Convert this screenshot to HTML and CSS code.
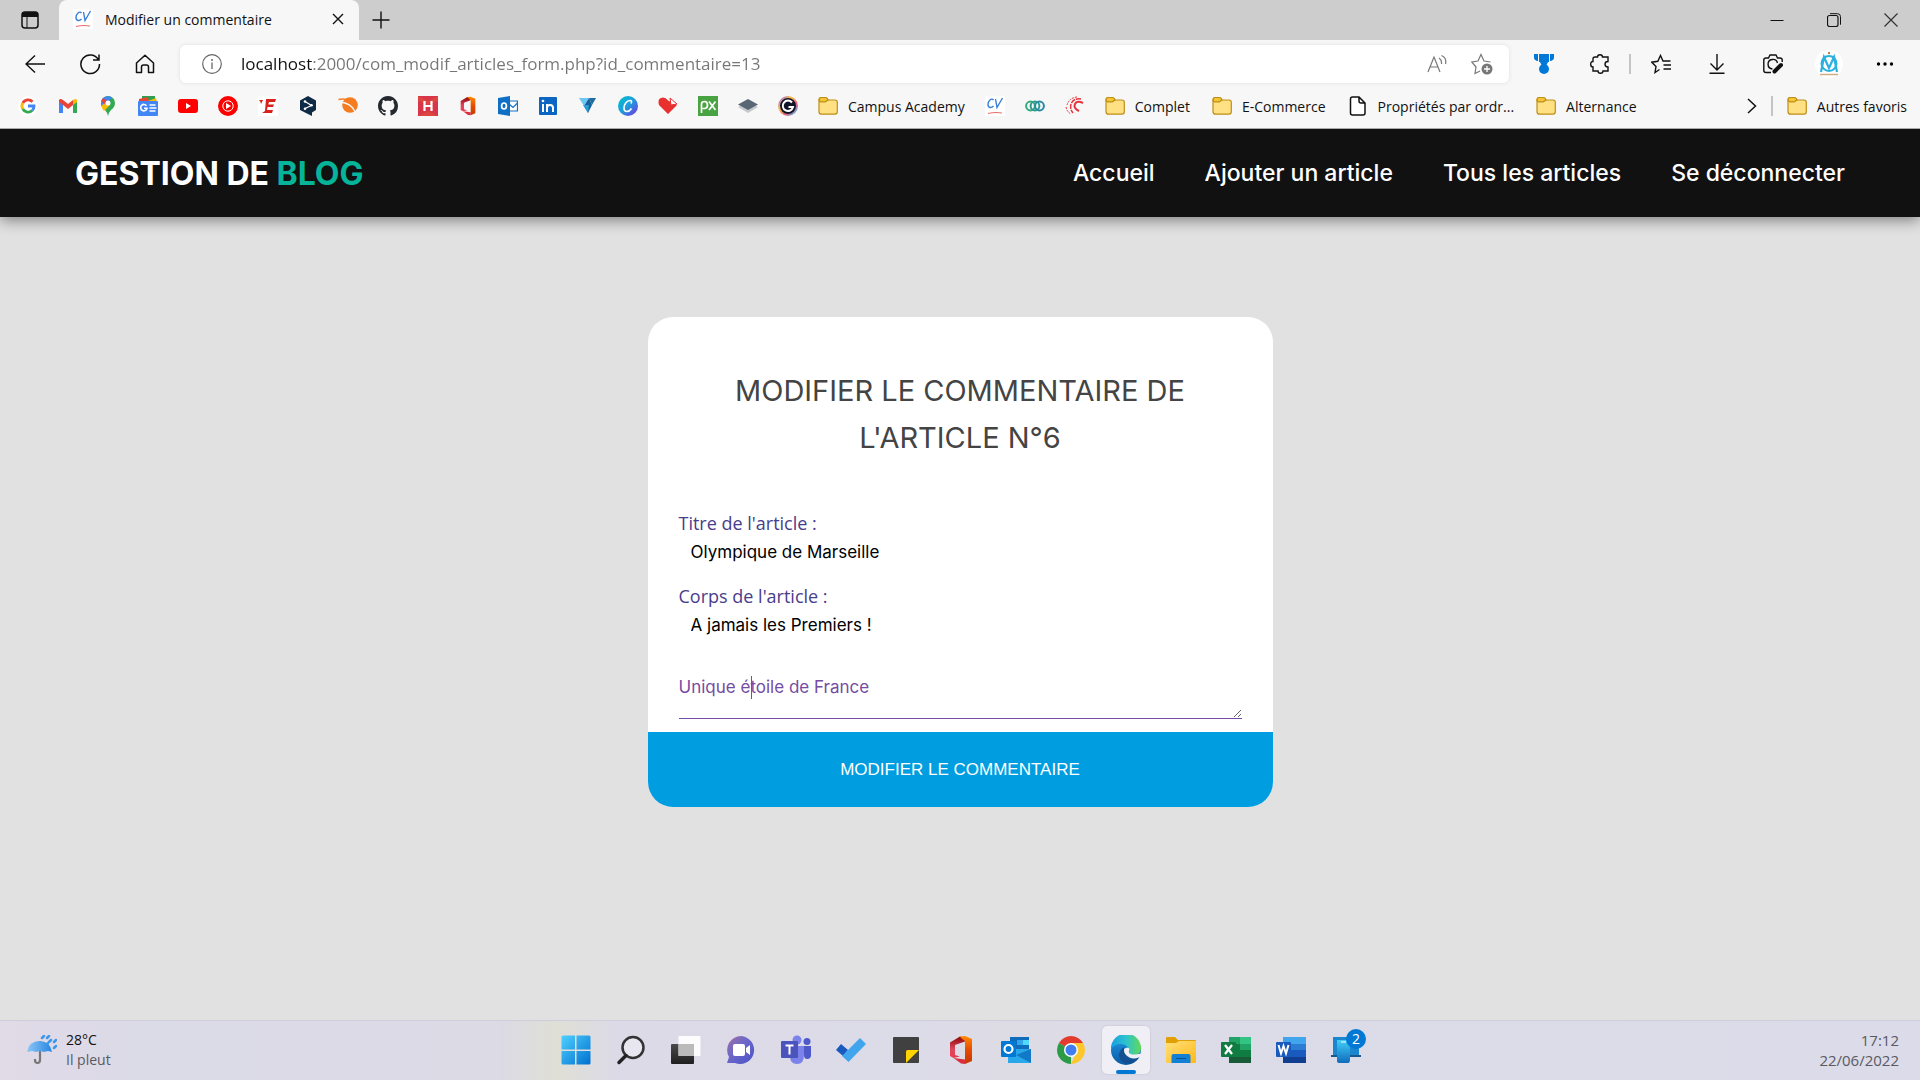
FILE: index.html
```html
<!DOCTYPE html>
<html lang="fr">
<head>
<meta charset="utf-8">
<meta name="viewport" content="width=device-width, initial-scale=1">
<title>Modifier un commentaire</title>
<link rel="stylesheet" href="styles.css">
</head>
<body>
<svg class="defs" aria-hidden="true">
  <defs>
    <linearGradient id="win" x1="0" y1="0" x2="1" y2="1"><stop offset="0" stop-color="#4fd0ff"/><stop offset="1" stop-color="#0070d0"/></linearGradient>
    <linearGradient id="dark" x1="0" y1="0" x2="0" y2="1"><stop offset="0" stop-color="#4a4a4a"/><stop offset="1" stop-color="#1f1f1f"/></linearGradient>
    <linearGradient id="chat" x1="0" y1="0" x2="1" y2="1"><stop offset="0" stop-color="#a36f9e"/><stop offset=".4" stop-color="#6e68c8"/><stop offset="1" stop-color="#4a52c8"/></linearGradient>
    <linearGradient id="office" x1="0" y1="0" x2="0" y2="1"><stop offset="0" stop-color="#ff8a00"/><stop offset=".5" stop-color="#e64a00"/><stop offset="1" stop-color="#c43800"/></linearGradient>
    <linearGradient id="office2" x1="0" y1="0" x2="0" y2="1"><stop offset="0" stop-color="#8c0808"/><stop offset=".6" stop-color="#e0475e"/><stop offset="1" stop-color="#e83a4f"/></linearGradient>
    <linearGradient id="edgeTop" x1="0" y1="0" x2="1" y2="0"><stop offset="0" stop-color="#1b9de2"/><stop offset=".5" stop-color="#2cc3cf"/><stop offset="1" stop-color="#62d957"/></linearGradient>
    <linearGradient id="edgeLow" x1="0" y1="0" x2="0" y2="1"><stop offset="0" stop-color="#1f9ce8"/><stop offset="1" stop-color="#0c59a4"/></linearGradient>
    <linearGradient id="fold" x1="0" y1="0" x2="1" y2="1"><stop offset="0" stop-color="#ffe07a"/><stop offset="1" stop-color="#ffb91a"/></linearGradient>
    <linearGradient id="canva" x1="0" y1="0" x2="1" y2="1"><stop offset="0" stop-color="#00c4cc"/><stop offset=".5" stop-color="#1f9bdc"/><stop offset="1" stop-color="#7d2ae8"/></linearGradient>
    <linearGradient id="brolly" x1="0" y1="0" x2="1" y2="0"><stop offset="0" stop-color="#8cc6f5"/><stop offset="1" stop-color="#2786e0"/></linearGradient>
    <linearGradient id="ring" x1="0" y1="0" x2="1" y2="1"><stop offset="0" stop-color="#a35cf0"/><stop offset=".35" stop-color="#f9c440"/><stop offset=".65" stop-color="#ef5a7e"/><stop offset="1" stop-color="#3bc9f0"/></linearGradient>
    <linearGradient id="phone" x1="0" y1="0" x2="0" y2="1"><stop offset="0" stop-color="#43cdf6"/><stop offset="1" stop-color="#0f6cbd"/></linearGradient>
    <symbol id="i-folder" viewBox="0 0 20 20"><path d="M1 4.500Q1 1.500 4 1.500H7.500Q9 1.500 10 4H17Q19.300 4 19.300 6.300V15.500Q19.300 18.200 17 18.200H3.500Q1 18.200 1 15.500Z" fill="#ffe083" stroke="#bd8f18" stroke-width="1.200"/><path d="M1 3.800Q1 1.500 3.200 1.500H7.500Q9 1.500 10 4L7.300 5.800H3Q1 5.800 1 3.800Z" fill="#f5c432" stroke="#bd8f18" stroke-width="1.200"/></symbol>
    <symbol id="i-cv" viewBox="0 0 20 20"><rect width="20" height="20" fill="#fff"/><path d="M8.500 4C6.500 1.500 3 5 3 8.500S6.500 12.500 8.500 9.800M10.500 3L12 11.500 17.500 2" fill="none" stroke="#3b80d8" stroke-width="1.400"/><path d="M3 17.500Q10 15.800 17 17" fill="none" stroke="#ee6b6b" stroke-width="1.200"/></symbol>
    <symbol id="i-office" viewBox="0 0 30 30"><path d="M4 7.500L14 1.500 19 3v3.500L9 10v10l5 1.500v0L7.500 23 4 21Z" fill="url(#office2)"/><path d="M14 1.500L19 1l7 3v22l-7 3V6l-4-3Z" fill="url(#office)"/><path d="M7.500 23L19 24.500V29l-4-.500Z" fill="#d9303f"/></symbol>
  </defs>
</svg>

<header class="browser">
  <div class="titlebar">
    <button class="tab-menu" aria-label="Menu des onglets"><svg width="20" height="20" viewBox="0 0 20 20"><rect x="2" y="2" width="16" height="16" rx="3" fill="none" stroke="#111" stroke-width="1.500"/><path d="M2 7V4q0-2 2-2h12q2 0 2 2v3Z" fill="#111"/><path d="M7 7v11" stroke="#111"/></svg></button>
    <div class="tab">
      <svg width="20" height="20"><use href="#i-cv"/></svg>
      <span class="tab-title">Modifier un commentaire</span>
      <button aria-label="Fermer l'onglet"><svg width="12" height="12" viewBox="0 0 12 12"><path d="M1 1l10 10M11 1L1 11" stroke="#111" stroke-width="1.400"/></svg></button>
    </div>
    <button class="new-tab" aria-label="Nouvel onglet"><svg width="18" height="18" viewBox="0 0 18 18"><path d="M9 .500v17M.500 9h17" stroke="#111" stroke-width="1.400"/></svg></button>
    <div class="window-controls">
      <button aria-label="Réduire"><svg width="14" height="14" viewBox="0 0 14 14"><path d="M.500 7.500h13" stroke="#111"/></svg></button>
      <button aria-label="Restaurer"><svg width="14" height="14" viewBox="0 0 14 14"><rect x=".500" y="2.500" width="10.500" height="11" rx="2" fill="none" stroke="#111" stroke-width="1.200"/><path d="M3 .700h7.500q3 0 3 3v8" fill="none" stroke="#111"/></svg></button>
      <button aria-label="Fermer"><svg width="14" height="14" viewBox="0 0 14 14"><path d="M.500.500l13 13M13.500.500l-13 13" stroke="#333" stroke-width="1.200"/></svg></button>
    </div>
  </div>

  <div class="toolbar">
    <button class="tool" aria-label="Précédent"><svg width="20" height="20" viewBox="0 0 20 20"><path d="M10 1.500L1 10l9 8.500M1 10h19" fill="none" stroke="#111" stroke-width="1.400"/></svg></button>
    <button class="tool" aria-label="Actualiser"><svg width="22" height="22" viewBox="0 0 22 22"><path d="M19.500 7A9.300 9.300 0 1 0 20.500 11M20 1.500V7h-6" fill="none" stroke="#111" stroke-width="1.500"/></svg></button>
    <button class="tool" aria-label="Accueil"><svg width="20" height="20" viewBox="0 0 20 20"><path d="M1.500 9L10 1.200 18.500 9v9.500h-5V13q0-2-2-2h-3q-2 0-2 2v5.500h-5Z" fill="none" stroke="#111" stroke-width="1.500" stroke-linejoin="round"/></svg></button>
    <div class="address">
      <svg width="20" height="20" viewBox="0 0 20 20"><circle cx="10" cy="10" r="9.300" fill="none" stroke="#666" stroke-width="1.200"/><path d="M10 8.500v6.500" stroke="#666" stroke-width="1.300"/><circle cx="10" cy="6" r="1" fill="#666"/></svg>
      <input class="url" type="text" aria-label="Adresse" value="localhost:2000/com_modif_articles_form.php?id_commentaire=13">
      <button aria-label="Lecture à voix haute"><svg width="20" height="20" viewBox="0 0 20 20"><path d="M1 18L7 3l6 15M3 13h8M12 4q3 2 2.500 6M14.500 1.500Q20 4 18.500 10" fill="none" stroke="#777" stroke-width="1.200"/></svg></button>
      <button aria-label="Ajouter aux favoris"><svg width="22" height="22" viewBox="0 0 22 22"><path d="M9 18L4 20.500 5 14 .800 9 7 8 10 1.500 13 8 19.500 9" fill="none" stroke="#777" stroke-width="1.200"/><circle cx="16" cy="16" r="5.500" fill="#777"/><path d="M16 13v6M13 16h6" stroke="#fff" stroke-width="1.300"/></svg></button>
    </div>
    <div class="tools">
      <button class="tool" aria-label="Rewards"><svg width="20" height="20" viewBox="0 0 20 20"><path d="M0 0h4v7H3Q0 6 0 4ZM5 0h10v8H5ZM16 0h4v4q0 2-3 3h-1ZM6 8h8l-2 4H8Z" fill="#0078d7"/><circle cx="10" cy="15" r="5" fill="#0078d7"/></svg></button>
      <button class="tool" aria-label="Extensions"><svg width="20" height="20" viewBox="0 0 20 20"><path d="M5 3h2.500Q7.500 .800 10 .800T12.500 3H18v4.500q-3 0-3 2.700T18 13v4h-5q0 2.200-2.500 2.200T8 17H3v-4Q.700 13 .700 10.200T3 7.500V5Q3 3 5 3Z" fill="none" stroke="#111" stroke-width="1.400"/></svg></button>
      <span class="separator"></span>
      <button class="tool" aria-label="Favoris"><svg width="20" height="20" viewBox="0 0 20 20"><path d="M8.500 15.500L4 18.500 5 12.500 .800 8.200 6.800 7.300 9.500 1.500 12 7H19.500M12.500 11H20M12.500 15H20" fill="none" stroke="#111" stroke-width="1.400"/></svg></button>
      <button class="tool" aria-label="Téléchargements"><svg width="20" height="20" viewBox="0 0 20 20"><path d="M10 0v16M3.500 9.500L10 16l6.500-6.500M2.500 19.200h15" fill="none" stroke="#111" stroke-width="1.400"/></svg></button>
      <button class="tool" aria-label="Capture web"><svg width="20" height="20" viewBox="0 0 20 20"><path d="M8 18.500H3q-2.200 0-2.200-2V6Q.800 4 3 4h2.500L7 1h6l1.500 3H17q2.200 0 2.200 2v2" fill="none" stroke="#111" stroke-width="1.400"/><path d="M9.500 15A4.800 4.800 0 1 1 14.500 9" fill="none" stroke="#111" stroke-width="1.400"/><path d="M11.500 17.500l6.500-6.500" stroke="#111" stroke-width="4" stroke-linecap="round"/></svg></button>
      <button class="tool" aria-label="Profil"><svg width="28" height="28" viewBox="0 0 28 28"><circle cx="14" cy="14" r="14" fill="#fff"/><circle cx="14" cy="13.500" r="7.500" fill="none" stroke="#2bb0df" stroke-width="2"/><path d="M6 22L9 7l5 11 5-11 3 15" fill="none" stroke="#2bb0df" stroke-width="2.200"/><circle cx="14" cy="3" r="1.200" fill="#c0824a"/><path d="M5 24.500h18" stroke="#cfae83" stroke-width="1.500"/></svg></button>
      <button class="tool" aria-label="Paramètres et plus"><svg width="18" height="6" viewBox="0 0 18 6"><circle cx="2.500" cy="3" r="1.700"/><circle cx="9" cy="3" r="1.700"/><circle cx="15.500" cy="3" r="1.700"/></svg></button>
    </div>
  </div>

  <nav class="bookmarks" aria-label="Favoris">
    <a href="#" aria-label="Google"><svg width="20" height="20" viewBox="0 0 20 20"><circle cx="10" cy="10" r="10" fill="#fff"/><g fill="none" stroke-width="2.800"><path d="M14.500 5.800A6 6 0 0 0 4.800 7" stroke="#ea4335"/><path d="M4.800 7a6 6 0 0 0 0 6" stroke="#fbbc05"/><path d="M4.800 13a6 6 0 0 0 9.400 1.500" stroke="#34a853"/><path d="M14.200 14.500A6 6 0 0 0 16 10H10" stroke="#4285f4"/></g></svg></a>
    <a href="#" aria-label="Gmail"><svg width="20" height="20" viewBox="0 0 20 20"><path d="M1 4v13h4V8Z" fill="#4285f4"/><path d="M19 4v13h-4V8Z" fill="#34a853"/><path d="M1 4q1-2 4 0l5 4 5-4v5l-5 4-5-4-4-3Z" fill="#ea4335"/><path d="M15 4q3-2 4 0v2l-4 3Z" fill="#fbbc04"/></svg></a>
    <a href="#" aria-label="Google Maps"><svg width="20" height="20" viewBox="0 0 20 20"><path d="M3 7a7 7 0 0 1 14 0q0 4-4 7-2 2-3 6-1-4-3-6-4-3-4-7Z" fill="#34a853"/><path d="M3 7a7 7 0 0 1 11-5.500L4.500 12Q3 9.500 3 7Z" fill="#4285f4"/><path d="M3.500 10L8 5l4 4-6 6Q4 12.500 3.500 10Z" fill="#fbbc04"/><path d="M3.500 4.500L5 2l4 3-3 3.500Z" fill="#ea4335"/><circle cx="10" cy="7" r="2.500" fill="#fff"/></svg></a>
    <a href="#" aria-label="Google Actualités"><svg width="20" height="20" viewBox="0 0 20 20"><path d="M4 0h13v5H4Z" fill="#2f9e50"/><path d="M1 3l9-2 1 5H1Z" fill="#e94235"/><path d="M10 5l8-3 1 4h-9Z" fill="#fbbc04"/><rect y="5" width="20" height="15" rx="1" fill="#4285f4"/><path d="M8.500 9.800A3.200 3.200 0 1 0 9 12.300H6M11.500 9h6M11.500 12h7M11.500 15h6" fill="none" stroke="#fff" stroke-width="1.600"/></svg></a>
    <a href="#" aria-label="YouTube"><svg width="20" height="20" viewBox="0 0 20 20"><rect y="3" width="20" height="14" rx="3" fill="#f00"/><path d="M8 7l5 3-5 3Z" fill="#fff"/></svg></a>
    <a href="#" aria-label="YouTube Music"><svg width="20" height="20" viewBox="0 0 20 20"><circle cx="10" cy="10" r="10" fill="#f00"/><circle cx="10" cy="10" r="5.200" fill="none" stroke="#fff"/><path d="M8 7l5 3-5 3Z" fill="#fff"/></svg></a>
    <a href="#" aria-label="L'Équipe"><svg width="20" height="20" viewBox="0 0 20 20"><rect width="20" height="20" fill="#fff"/><path d="M1 4h4L3 8 2.500 6Z M8 3h10l-1 3h-6l-.700 2.500H16l-1 2.500H9.500L9 14h6l-1 3H4l3-2Z" fill="#d8231b"/></svg></a>
    <a href="#" aria-label="DeepL"><svg width="20" height="20" viewBox="0 0 20 20"><path d="M10 0l8 4.500v9.500l-4 2.500V20l-5-2.500L2 14V4.500Z" fill="#0f2b46"/><path d="M7 5.500l6.500 4L7 12.500" fill="none" stroke="#fff" stroke-width="1.200"/><circle cx="7" cy="5.500" r="1.300" fill="#fff"/><circle cx="13.500" cy="9.300" r="1.300" fill="#fff"/><circle cx="7" cy="12.700" r="1.300" fill="#fff"/></svg></a>
    <a href="#" aria-label="Astronomie"><svg width="20" height="20" viewBox="0 0 20 20"><circle cx="12" cy="9" r="7.800" fill="#f57c20"/><path d="M2 6q11 1 15 9.500" fill="none" stroke="#f7f7f7" stroke-width="1.300"/><path d="M.500 3.500q6-1.500 10 1" fill="none" stroke="#f57c20" stroke-width="1.400"/></svg></a>
    <a href="#" aria-label="GitHub"><svg width="20" height="20" viewBox="0 0 16 16"><path fill="#24292f" d="M8 0C3.580 0 0 3.580 0 8c0 3.540 2.290 6.530 5.470 7.590.4.070.55-.17.55-.38 0-.19-.01-.82-.01-1.490-2.010.37-2.530-.49-2.690-.94-.09-.23-.48-.94-.82-1.130-.28-.15-.68-.52-.01-.53.630-.01 1.080.58 1.230.82.720 1.210 1.870.87 2.330.66.070-.52.280-.87.510-1.070-1.780-.2-3.640-.89-3.640-3.950 0-.87.310-1.590.82-2.150-.08-.2-.36-1.020.08-2.120 0 0 .67-.21 2.200.82.640-.18 1.320-.27 2-.27s1.360.09 2 .27c1.530-1.040 2.200-.82 2.200-.82.440 1.100.16 1.920.08 2.120.51.560.82 1.270.82 2.150 0 3.070-1.870 3.750-3.650 3.950.29.250.54.730.54 1.480 0 1.070-.01 1.930-.01 2.200 0 .21.15.46.55.38A8.010 8.010 0 0 0 16 8c0-4.420-3.580-8-8-8Z"/></svg></a>
    <a href="#" aria-label="Hellowork"><svg width="20" height="20" viewBox="0 0 20 20"><rect width="20" height="20" fill="#d93548"/><path d="M0 0l10 5 10-5v5l-10 4L0 5ZM0 20l10-5 10 5" fill="#e0503c" fill-opacity=".6"/><path d="M6.500 5v10M13.500 5v10M6.500 10h7" stroke="#fff" stroke-width="2.200"/></svg></a>
    <a href="#" aria-label="Office"><svg width="20" height="20"><use href="#i-office"/></svg></a>
    <a href="#" aria-label="Outlook"><svg width="20" height="20" viewBox="0 0 20 20"><path d="M11 5h8.500v10H11Z" fill="#fff" stroke="#1272c4" stroke-width="1.200"/><path d="M11 8l4 3.500L19.500 7" fill="none" stroke="#1272c4" stroke-width="1.200"/><path d="M0 2l12-2v20L0 18Z" fill="#0f6fc5"/><ellipse cx="6" cy="10" rx="2.400" ry="3" fill="none" stroke="#fff" stroke-width="1.700"/></svg></a>
    <a href="#" aria-label="LinkedIn"><svg width="20" height="20" viewBox="0 0 20 20"><rect x="1" y="1" width="18" height="18" rx="1" fill="#0a66c2"/><path d="M5 8v8M9 16V8M9 12q0-3 3-3t3 3v4" fill="none" stroke="#fff" stroke-width="2"/><circle cx="5" cy="5" r="1.300" fill="#fff"/></svg></a>
    <a href="#" aria-label="Vectary"><svg width="20" height="20" viewBox="0 0 20 20"><path d="M1 2h10L6 10Z" fill="#6bc7f2"/><path d="M11 2h7l-4 7Z" fill="#1d6da3"/><path d="M6 10l5-8 3 7-4 8Z" fill="#12609a"/><path d="M5 9h6l-1 8Z" fill="#2a9bd6"/></svg></a>
    <a href="#" aria-label="Canva"><svg width="20" height="20" viewBox="0 0 20 20"><circle cx="10" cy="10" r="10" fill="url(#canva)"/><path d="M13 7.500q1.500-3-1-3C8.500 4.500 6 8.500 6 12q0 3.500 3 3.500 2.500 0 4.500-3" fill="none" stroke="#fff" stroke-width="1.600"/></svg></a>
    <a href="#" aria-label="Santé"><svg width="20" height="20" viewBox="0 0 20 20"><path d="M10 18L1 9Q-1 2 5 1.500q3 0 5 3l9 4.500Z" fill="#e8302e"/><path d="M12 2l7 6-6 1Z" fill="#fff" stroke="#e8302e"/></svg></a>
    <a href="#" aria-label="Pexels"><svg width="20" height="20" viewBox="0 0 20 20"><rect width="20" height="20" fill="#4aa342"/><path d="M3.500 17V8q0-2.500 3-2.500T9.500 9t-3 3.500h-2M11 5.500l6.500 8.500M17.500 5.500L11 14" fill="none" stroke="#fff" stroke-width="1.700"/></svg></a>
    <a href="#" aria-label="Couches"><svg width="20" height="20" viewBox="0 0 20 20"><path d="M0 11l10-5 10 5-10 6Z" fill="#c5c9cd"/><path d="M0 8.500L10 3l10 5.500-10 5.500Z" fill="#596673"/></svg></a>
    <a href="#" aria-label="Clé G"><svg width="20" height="20" viewBox="0 0 20 20"><circle cx="10" cy="10" r="9" fill="#111528" stroke="url(#ring)" stroke-width="2"/><path d="M14 6.500A5.200 5.200 0 1 0 15 11h-4.500" fill="none" stroke="#fff" stroke-width="2"/></svg></a>
    <a href="#"><svg width="20" height="20"><use href="#i-folder"/></svg>Campus Academy</a>
    <a href="#" aria-label="CV"><svg width="20" height="20"><use href="#i-cv"/></svg></a>
    <a href="#" aria-label="Co"><svg width="20" height="20" viewBox="0 0 20 20"><g fill="none" stroke-width="2"><circle cx="5.500" cy="10" r="4.400" stroke="#35a877"/><circle cx="10" cy="10" r="4.400" stroke="#2a9d8a"/><circle cx="14.500" cy="10" r="4.400" stroke="#2789a8"/></g></svg></a>
    <a href="#" aria-label="Spirale"><svg width="20" height="20" viewBox="0 0 20 20"><g fill="none" stroke="#e5343c"><path d="M18 7Q12 4 10 8t4 7" stroke-width="2"/><path d="M16 3Q9 2 6.500 7T8 17" stroke-width="1.500" stroke-dasharray="5 1"/><path d="M12 1Q4 2 2 9M1 11q1 5 5 7" stroke-dasharray="2 1"/></g></svg></a>
    <a class="named" href="#"><svg width="20" height="20"><use href="#i-folder"/></svg>Complet</a>
    <a class="named" href="#"><svg width="20" height="20"><use href="#i-folder"/></svg>E-Commerce</a>
    <a class="named" href="#"><svg width="20" height="20" viewBox="0 0 20 20"><path d="M2.500 3q0-2 2-2H11l6 6v10q0 2-2 2H4.500q-2 0-2-2ZM11 1v4q0 2 2 2h4" fill="#fff" stroke="#111" stroke-width="1.500"/></svg>Propriétés par ordr...</a>
    <a class="named" href="#"><svg width="20" height="20"><use href="#i-folder"/></svg>Alternance</a>
    <div class="bookmarks-end">
      <button aria-label="Plus de favoris"><svg width="10" height="16" viewBox="0 0 10 16"><path d="M1 1l7.500 7L1 15" fill="none" stroke="#111" stroke-width="1.500"/></svg></button>
      <span class="separator"></span>
      <a href="#"><svg width="20" height="20"><use href="#i-folder"/></svg>Autres favoris</a>
    </div>
  </nav>
</header>

<div class="page">
  <header class="site-header">
    <a class="logo" href="#">GESTION DE <span>BLOG</span></a>
    <nav class="site-nav">
      <a href="#">Accueil</a>
      <a href="#">Ajouter un article</a>
      <a href="#">Tous les articles</a>
      <a href="#">Se déconnecter</a>
    </nav>
  </header>
  <main class="content">
    <form class="card">
      <h1>MODIFIER LE COMMENTAIRE DE L'ARTICLE N°6</h1>
      <div class="fields">
        <label for="titre">Titre de l'article :</label>
        <input id="titre" type="text" value="Olympique de Marseille" readonly>
        <label for="corps">Corps de l'article :</label>
        <input id="corps" type="text" value="A jamais les Premiers !" readonly>
        <div class="comment">
          <textarea aria-label="Commentaire">Unique étoile de France</textarea>
          <span class="caret"></span>
        </div>
      </div>
      <button class="submit" type="button">MODIFIER LE COMMENTAIRE</button>
    </form>
  </main>
</div>

<footer class="taskbar">
  <button class="weather">
    <svg width="30" height="30" viewBox="0 0 30 30"><path d="M13 6v19q0 3-2.500 3T8 25v-1" fill="none" stroke="#777" stroke-width="2.200"/><path d="M0 17Q2 6 12.500 6T25 17l-4-1-4 1-4-1-4 1-4-1Z" fill="url(#brolly)"/><path d="M15 3l2-2M20 3l2-2M22 7l2-2M27 7l2-2M20 9l1-1M27 13l2-2" stroke="#3f97ea" stroke-width="2.500" stroke-linecap="round"/></svg>
    <span class="weather-text"><span>28°C</span><span class="muted">Il pleut</span></span>
  </button>
  <div class="apps">
    <button aria-label="Démarrer"><svg width="30" height="30" viewBox="0 0 30 30"><path d="M2 .500h12v14H.500V2Q.500.500 2 .500ZM15.500.500H28q1.500 0 1.500 1.500v12.500h-14ZM.500 16H14v13.500H2Q.500 29.500.500 28ZM15.500 16h14v12q0 1.500-1.500 1.500H15.500Z" fill="url(#win)"/></svg></button>
    <button aria-label="Rechercher"><svg width="30" height="30" viewBox="0 0 30 30"><circle cx="17" cy="12.500" r="10.500" fill="#e8e6ef" stroke="#333" stroke-width="2.500"/><path d="M10 20.500l-7 7" stroke="#222" stroke-width="3.500" stroke-linecap="round"/></svg></button>
    <button aria-label="Vue des tâches"><svg width="30" height="30" viewBox="0 0 30 30"><rect y="9" width="23" height="20" rx="1" fill="url(#dark)"/><rect x="7.500" y="1" width="22" height="20" rx="1" fill="#fff" fill-opacity=".9"/><path d="M7.500 9H23v12H7.500Z" fill="#bbb"/></svg></button>
    <button aria-label="Conversation"><svg width="30" height="30" viewBox="0 0 30 30"><path d="M15 1a14 14 0 1 1-6 27H1l2-6A14 14 0 0 1 15 1Z" fill="url(#chat)"/><rect x="7" y="9" width="12" height="12" rx="2" fill="#fff"/><path d="M20 13l4-3v10l-4-3Z" fill="#fff"/></svg></button>
    <button aria-label="Teams"><svg width="30" height="30" viewBox="0 0 30 30"><circle cx="16" cy="5" r="4.500" fill="#7b83eb"/><circle cx="26" cy="6.500" r="3.500" fill="#5059c9"/><path d="M9 11h14v9q0 9-7 9t-7-8Z" fill="#7b83eb"/><path d="M23 11h7v9q0 4-4 4-3 0-3-4Z" fill="#5059c9"/><rect y="6" width="17" height="17" rx="1" fill="#4b53bc"/><path d="M4.500 10.500h8M8.500 10.500v9" stroke="#fff" stroke-width="2"/></svg></button>
    <button aria-label="To Do"><svg width="30" height="30" viewBox="0 0 30 30"><path d="M0 15l5-6 7 6-5 6Z" fill="#185abd"/><path d="M6 21l6-6L24 3l6 6-17.500 18Z" fill="#41a5ee"/></svg></button>
    <button aria-label="Pense-bêtes"><svg width="30" height="30" viewBox="0 0 30 30"><rect x="2" y="2" width="26" height="26" rx="1" fill="#404040"/><path d="M15 28V16.500q0-1.500 1.500-1.500H28Z" fill="#ffd400"/></svg></button>
    <button aria-label="Office"><svg width="30" height="30"><use href="#i-office"/></svg></button>
    <button aria-label="Outlook"><svg width="30" height="30" viewBox="0 0 30 30"><path d="M9 2h19v14H9Z" fill="#0f6cbd"/><path d="M16 5h6v5h-6Z" fill="#32a5e8"/><path d="M22 5h6v5h-6Z" fill="#50d9ff"/><path d="M7 14l23 0v14H7Z" fill="#28a8ea"/><path d="M30 14v14L15 20Z" fill="#1279c8"/><rect y="6" width="15" height="16" rx="1" fill="#0078d4"/><circle cx="7.500" cy="14" r="4" fill="none" stroke="#fff" stroke-width="2.200"/></svg></button>
    <button aria-label="Chrome"><svg width="30" height="30" viewBox="0 0 30 30"><path d="M15 15L2.900 8A14 14 0 0 1 27.100 8Z" fill="#e33b2e"/><path d="M15 15L2.900 8A14 14 0 0 0 15 29Z" fill="#2b9b46"/><path d="M15 29A14 14 0 0 0 27.100 8H15v7l5 3.500Z" fill="#fcc72b"/><circle cx="15" cy="15" r="7" fill="#fff"/><circle cx="15" cy="15" r="5.500" fill="#3f7df0"/></svg></button>
    <button class="active" aria-label="Edge"><svg width="30" height="30" viewBox="0 0 30 30"><circle cx="15" cy="15" r="15" fill="url(#edgeLow)"/><path d="M0 14A15 15 0 0 1 30 13Q30 20 23 20 18 20 18 17 19 15 17 12 12 7 5 10 1 12 0 14Z" fill="url(#edgeTop)"/><path d="M13 12Q6 17 9 24 13 30 20 28.500 26 26 28 22.500 23 25 18 23 12 19 13 12Z" fill="#124f91"/><path d="M13 14q4-3 5.500 0-1 2.500-.500 3.500 2 3.500 12 1V21l-2.500 1.500q-4.500 2-9 0Q12.500 19.500 13 14Z" fill="#f0eff5"/></svg></button>
    <button aria-label="Explorateur"><svg width="30" height="30" viewBox="0 0 30 30"><path d="M0 3q0-1 1-1h8l3 3h17q1 0 1 1v8H0Z" fill="#e0a006"/><path d="M0 8h10l3-2h16q1 0 1 1v20q0 1-1 1H1q-1 0-1-1Z" fill="url(#fold)"/><path d="M5.500 28v-7q0-2 2-2h15q2 0 2 2v7Z" fill="#1280d4"/><path d="M10 23.500h10" stroke="#0a4f91"/></svg></button>
    <button aria-label="Excel"><svg width="30" height="30" viewBox="0 0 30 30"><path d="M8 2h11v7H8ZM19 9h11v6H19" fill="#21a366"/><path d="M19 2h11v7H19Z" fill="#33c481"/><path d="M8 9h11v13H8Z" fill="#107c41"/><path d="M19 15h11v7H19Z" fill="#107c41"/><path d="M8 22h22v6H8Z" fill="#185c37"/><rect y="7" width="15" height="15" rx="1" fill="#107c41"/><path d="M4 10l7 9M11 10l-7 9" stroke="#fff" stroke-width="2.300"/></svg></button>
    <button aria-label="Word"><svg width="30" height="30" viewBox="0 0 30 30"><path d="M7 2h23v7H7Z" fill="#41a5ee"/><path d="M7 9h23v6H7Z" fill="#2b7cd3"/><path d="M7 15h23v7H7Z" fill="#185abd"/><path d="M7 22h23v6H7Z" fill="#103f91"/><rect y="7" width="15" height="15" rx="1" fill="#185abd"/><path d="M2.500 10l2.500 8.500L7.500 11l2.500 7.500L12.500 10" fill="none" stroke="#fff" stroke-width="2"/></svg></button>
    <button aria-label="Votre téléphone"><svg width="30" height="30" viewBox="0 0 30 30"><path d="M2 2h26v18H2Z" fill="#1a86cf"/><path d="M0 20h30v2H0Z" fill="#17598f"/><path d="M6 5h13v20q0 3-2 3H8q-2 0-2-2Z" fill="url(#phone)"/><path d="M10 7h5" stroke="#fff"/></svg><span class="badge">2</span></button>
  </div>
  <button class="clock"><time>17:12</time><time>22/06/2022</time></button>
</footer>
</body>
</html>
```
FILE: styles.css
```css
* {
  box-sizing: border-box;
}

body {
  display: flex;
  flex-direction: column;
  min-height: 100vh;
  margin: 0;
  background: #e1e1e1;
  color: #111;
  font-family: "Open Sans", "Noto Sans", sans-serif;
  font-size: 14px;
}

button,
input,
textarea {
  margin: 0;
  padding: 0;
  border: 0;
  outline: 0;
  background: none;
  color: inherit;
  font: inherit;
}

button {
  display: flex;
  align-items: center;
  justify-content: center;
}

a {
  color: inherit;
  text-decoration: none;
}

svg {
  display: block;
  flex: none;
}

.defs {
  position: absolute;
  width: 0;
  height: 0;
}

/* Browser chrome */
.browser {
  position: relative;
  z-index: 1;
  background: #f7f7f7;
  border-bottom: 1px solid #a9a9a9;
}

.titlebar {
  display: flex;
  height: 40px;
  background: #cdcdcd;
}

.tab-menu {
  width: 59px;
}

.tab {
  display: flex;
  align-items: center;
  width: 300px;
  padding: 0 15px 2px 14px;
  gap: 12px;
  border-radius: 8px 8px 0 0;
  background: #f7f7f7;
}

.tab-title {
  flex: 1;
}

.new-tab {
  width: 44px;
}

.window-controls {
  display: flex;
  margin-left: auto;
  padding-right: 1px;
}

.window-controls button {
  width: 57px;
}

.toolbar {
  display: flex;
  align-items: center;
  height: 48px;
  padding: 0 8px 0 7px;
}

.tool {
  width: 55px;
  height: 40px;
}

.address {
  display: flex;
  flex: 1;
  align-items: center;
  height: 38px;
  margin: 0 7px 0 8px;
  padding: 0 16px 0 22px;
  gap: 24px;
  border-radius: 6px;
  background: #fff;
  box-shadow: 0 0 4px #0000001a;
}

.url {
  flex: 1;
  margin-left: -5px;
  padding-bottom: 2px;
  background: linear-gradient(to right, #111 72px, #767676 72px) text;
  color: transparent;
  font-size: 17px;
}

.tools {
  display: flex;
  align-items: center;
  gap: 1px;
}

.tools .separator {
  margin: 0 1px;
}

.separator {
  width: 2px;
  height: 20px;
  background: #c4c4c4;
}

.bookmarks {
  display: flex;
  align-items: center;
  height: 40px;
  padding: 0 13px 4px 18px;
  gap: 20px;
}

.bookmarks a {
  display: flex;
  align-items: center;
  gap: 10px;
  white-space: nowrap;
}

.bookmarks .named {
  padding-right: 2px;
}

.bookmarks-end {
  display: flex;
  align-items: center;
  margin-left: auto;
  gap: 14px;
}

/* Site */
.page {
  flex: 1;
}

.site-header {
  display: flex;
  align-items: center;
  justify-content: space-between;
  height: 88px;
  padding: 0 75px;
  background: #111;
  box-shadow: 0 3px 14px #00000073;
  color: #fff;
  font-family: Inter, sans-serif;
}

.logo {
  font-size: 32px;
  font-weight: 700;
}

.logo span {
  color: #06b49a;
}

.site-nav {
  display: flex;
  gap: 50px;
  font-size: 23px;
  font-weight: 500;
}

.content {
  display: flex;
  justify-content: center;
  padding: 100px 16px;
}

.card {
  width: 100%;
  max-width: 625px;
  overflow: hidden;
  border-radius: 25px;
  background: #fff;
  font-family: Inter, sans-serif;
}

h1 {
  margin: 0;
  padding: 50px 64px;
  color: #444;
  font-size: 29px;
  font-weight: 400;
  line-height: 47px;
  text-align: center;
}

.fields {
  display: flex;
  flex-direction: column;
  padding: 0 31px 13px;
}

.fields label {
  color: #483d8b;
  font-family: "Open Sans", sans-serif;
  font-size: 18px;
  line-height: 24px;
}

.fields input {
  height: 33px;
  margin-bottom: 16px;
  padding: 0 12px;
  color: #000;
  font-size: 17px;
}

.comment {
  position: relative;
  display: flex;
}

.comment textarea {
  width: 100%;
  height: 62px;
  padding: 18px 0;
  border-bottom: 1px solid #764ba2;
  color: #764ba2;
  font-size: 17px;
  line-height: 24px;
}

.caret {
  position: absolute;
  top: 19px;
  left: 72px;
  width: 1px;
  height: 23px;
  background: #764ba2;
}

.submit {
  width: 100%;
  height: 75px;
  background: #009ee0;
  color: #fff;
  font-family: "Liberation Sans", sans-serif;
  font-size: 17px;
}

/* Taskbar */
.taskbar {
  display: grid;
  grid-template-columns: 1fr auto 1fr;
  align-items: center;
  height: 60px;
  padding-bottom: 2px;
  border-top: 1px solid #cfcddb;
  background: linear-gradient(to right, #e1dae7, #dbdae7 8%, #dbdae5 26%, #dfdfd6 29%, #dcdae6 32%, #dcdbe8 48%, #dddce4 53%, #dcdbe8 57%, #dbdbe9);
}

.weather {
  justify-self: start;
  gap: 9px;
  padding-left: 27px;
}

.weather-text,
.clock {
  display: flex;
  flex-direction: column;
  line-height: 20px;
}

.weather-text {
  align-items: flex-start;
}

.muted,
.clock {
  color: #5a5962;
}

.apps {
  display: flex;
  gap: 7px;
  padding-left: 2px;
}

.apps button {
  position: relative;
  width: 48px;
  height: 48px;
  border-radius: 5px;
}

.apps .active {
  background: #f0eff5;
  box-shadow: 0 0 2px #00000026;
}

.active::after {
  position: absolute;
  bottom: 0;
  left: 14px;
  width: 20px;
  height: 4px;
  border-radius: 2px;
  background: #0078d4;
  content: "";
}

.badge {
  position: absolute;
  top: 3px;
  right: 4px;
  width: 20px;
  height: 20px;
  border-radius: 50%;
  background: #0078d4;
  color: #fff;
  font-size: 14px;
  line-height: 20px;
}

.clock {
  justify-self: end;
  align-items: flex-end;
  padding-right: 21px;
  font-size: 15px;
}
```
